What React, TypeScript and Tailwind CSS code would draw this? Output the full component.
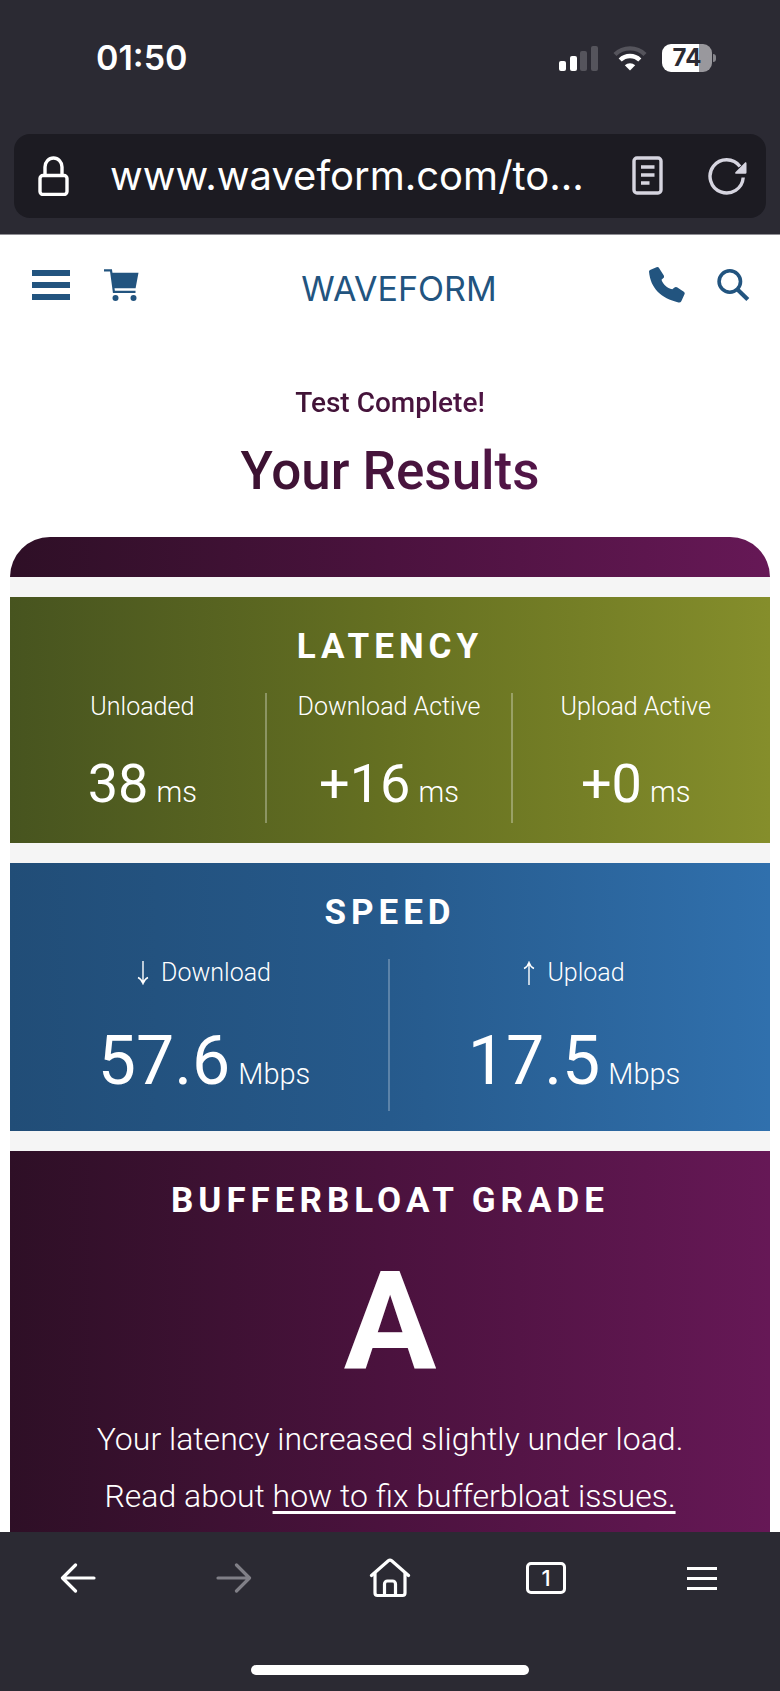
import * as React from "react";

const latency = [
  { label: "Unloaded", value: "38" },
  { label: "Download Active", value: "+16" },
  { label: "Upload Active", value: "+0" },
];

const speed = [
  { label: "Download", value: "57.6", down: true },
  { label: "Upload", value: "17.5", down: false },
];

const SignalIcon = () => (
  <svg width="39" height="25" viewBox="0 0 39 25" aria-hidden="true">
    <rect x="0" y="15" width="7" height="10" rx="2" fill="#fff" />
    <rect x="11" y="10" width="7" height="15" rx="2" fill="#fff" />
    <rect x="21" y="5" width="7" height="20" rx="2" fill="#55545c" />
    <rect x="32" y="0" width="7" height="25" rx="2" fill="#55545c" />
  </svg>
);

const WifiIcon = () => (
  <svg width="34" height="25" viewBox="0 0 34 25" fill="none" aria-hidden="true">
    <path d="M2 8.5a21.5 21.5 0 0 1 30 0" stroke="#55545c" strokeWidth="4.4" />
    <path d="M7.2 14a14 14 0 0 1 19.6 0" stroke="#fff" strokeWidth="4.4" />
    <path d="M17 24.6l5.2-5.4a7.6 7.6 0 0 0-10.4 0z" fill="#fff" />
  </svg>
);

const Battery = () => (
  <div className="flex items-center gap-px">
    <div className="flex h-7 w-[50px] items-center justify-center rounded-[9px] bg-linear-to-r from-white from-75% to-[#99989d] to-75% text-[24px] leading-7 font-bold text-[#2b2a33]">
      74
    </div>
    <div className="h-2 w-[3px] rounded-r-full bg-[#86858b]" />
  </div>
);

const LockIcon = () => (
  <svg width="32" height="40" viewBox="0 0 32 40" fill="none" stroke="#fff" strokeWidth="3.4" aria-hidden="true">
    <rect x="2" y="19.5" width="27" height="19" rx="3" />
    <path d="M7 19.5V11a8.5 9 0 0 1 17 0v8.5" />
  </svg>
);

const ReaderIcon = () => (
  <svg width="32" height="40" viewBox="0 0 32 40" fill="none" stroke="#d6d5e0" strokeWidth="3.4" aria-hidden="true">
    <rect x="2" y="2" width="27" height="35" rx="3" />
    <path d="M9 11h13.5M9 19h13.5M9 27h8.5" />
  </svg>
);

const ReloadIcon = () => (
  <svg width="40" height="38" viewBox="0 0 40 38" fill="none" aria-hidden="true">
    <path d="M35.2 20.5A16.6 16.6 0 1 1 32 9.5" stroke="#d6d5e0" strokeWidth="3.4" />
    <path d="M38.5 6.5v9a1.2 1.2 0 0 1-1.2 1.2h-9c-1.2 0-1.500-1-.7-1.800l9.200-9.200c.8-.8 1.700-.4 1.700.8z" fill="#d6d5e0" />
  </svg>
);

const CartIcon = () => (
  <svg width="35" height="32" viewBox="0 0 35 32" aria-hidden="true">
    <path d="M0 1.3h7l2.900 21.500h21.600" fill="none" stroke="#22547f" strokeWidth="2.2" />
    <path d="M7.500 3.800h27l-2.900 15.500H9.800z" fill="#22547f" />
    <circle cx="11.5" cy="29" r="3" fill="#22547f" />
    <circle cx="29.5" cy="29" r="3" fill="#22547f" />
  </svg>
);

const PhoneIcon = () => (
  <svg width="36" height="36" viewBox="0 0 36 36" fill="#22547f" aria-hidden="true">
    <path d="M0 4.500Q0 3.500 1 3L7.500.3Q9.200-.4 10.200 1.200L14.800 8.600Q15.500 10 14.400 11L12.500 12.800C14 17.500 18 21 23.300 22.300L25.500 20.400Q26.600 19.500 28 20.300L34.800 24.800Q36.200 25.800 35.500 27.300L32.300 34.200Q31.400 35.900 29.500 35.500C12 31 1.500 21.500 0 4.500Z" />
  </svg>
);

const SearchIcon = () => (
  <svg width="33" height="33" viewBox="0 0 33 33" fill="none" stroke="#22547f" aria-hidden="true">
    <circle cx="12.8" cy="12.5" r="10.7" strokeWidth="3.6" />
    <path d="M20.5 20.5l10.300 10" strokeWidth="4.2" />
  </svg>
);

const SpeedArrow = ({ down }: { down: boolean }) => (
  <svg width="12" height="24" viewBox="0 0 12 24" fill="none" stroke="#fff" strokeWidth="1.4" aria-hidden="true">
    {down ? <path d="M6 0v22M1 16.5q3.500 1.500 5 6 1.500-4.500 5-6" /> : <path d="M6 24V2M1 7.5Q4.500 6 6 1.500 7.500 6 11 7.500" />}
  </svg>
);

const ArrowIcon = ({ flip }: { flip?: boolean }) => (
  <svg
    width="36"
    height="30"
    viewBox="0 0 36 30"
    fill="none"
    stroke={flip ? "#807f87" : "#fff"}
    strokeWidth="3.2"
    strokeLinecap="round"
    strokeLinejoin="round"
    aria-hidden="true"
  >
    {flip ? <path d="M2 15h31M20.500 2L33.500 15l-13 13" /> : <path d="M34 15H3M15.500 2L2.500 15l13 13" />}
  </svg>
);

const HomeIcon = () => (
  <svg
    width="42"
    height="40"
    viewBox="0 0 42 40"
    fill="none"
    stroke="#fff"
    strokeWidth="3.2"
    strokeLinecap="round"
    strokeLinejoin="round"
    aria-hidden="true"
  >
    <path d="M2.500 17.500L19.300 2.800a2.600 2.600 0 0 1 3.400 0L39.500 17.500" />
    <path d="M6 15.500V35a2.500 2.500 0 0 0 2.500 2.500h25A2.500 2.500 0 0 0 36 35V15.500" />
    <path d="M15.500 37V26a3 3 0 0 1 3-3h5a3 3 0 0 1 3 3v11" />
  </svg>
);

const StatTitle = ({ children }: { children: React.ReactNode }) => (
  <h2 className="text-center text-[35px] leading-10 font-bold tracking-[5px] uppercase">{children}</h2>
);

export default function App() {
  return (
    <div className="flex min-h-screen flex-col bg-white font-['Roboto',sans-serif]">
      <header className="border-b border-[#8f8e94] bg-[#2b2a33] pb-4 font-['Inter',sans-serif]">
        <div className="flex items-center justify-between pt-10 pr-16 pb-[58px] pl-24 text-white">
          <span className="text-[34px] leading-9 font-semibold">01:50</span>
          <div className="flex items-center gap-[15px]">
            <SignalIcon />
            <WifiIcon />
            <Battery />
          </div>
        </div>
        <div className="mx-3.5 flex items-center rounded-2xl bg-[#1c1b22] py-3 pr-[18px] pl-6">
          <LockIcon />
          <input
            aria-label="Address"
            readOnly
            value="www.waveform.com/to..."
            className="ml-10 h-[60px] min-w-0 flex-1 bg-transparent text-[40px] text-white outline-none"
          />
          <div className="flex items-center gap-11">
            <button aria-label="Reader view">
              <ReaderIcon />
            </button>
            <button aria-label="Reload">
              <ReloadIcon />
            </button>
          </div>
        </div>
      </header>

      <nav className="grid grid-cols-[1fr_auto_1fr] items-center pt-7 pr-[30px] pl-8">
        <div className="flex items-center gap-[34px]">
          <button aria-label="Menu" className="flex w-[38px] flex-col gap-1.5">
            <span className="h-1.5 w-full bg-[#22547f]" />
            <span className="h-1.5 w-full bg-[#22547f]" />
            <span className="h-1.5 w-full bg-[#22547f]" />
          </button>
          <a href="#cart" aria-label="Cart">
            <CartIcon />
          </a>
        </div>
        <a href="#home" className="pt-2 pl-4 font-['Inter',sans-serif] text-[34px] leading-9 text-[#22547f]">
          WAVEFORM
        </a>
        <div className="flex items-center justify-end gap-8">
          <a href="#call" aria-label="Call">
            <PhoneIcon />
          </a>
          <button aria-label="Search">
            <SearchIcon />
          </button>
        </div>
      </nav>

      <main className="flex flex-1 flex-col px-2.5 pt-19">
        <div className="mx-auto mb-8.5 bg-linear-to-r from-[#3b1231] to-[#531548] bg-clip-text text-center text-transparent">
          <p className="text-[28px] leading-10 font-medium">Test Complete!</p>
          <h1 className="mt-4 text-[53px] leading-16 font-medium">Your Results</h1>
        </div>

        <div className="flex flex-1 flex-col gap-5 rounded-t-[40px] bg-[#f5f5f5] text-white">
          <div className="h-10 rounded-t-[40px] bg-linear-to-r from-[#2e0f26] via-[#4b123e] to-[#661856]" />

          <section className="bg-linear-to-r from-[#47541f] via-[#657021] to-[#858e2b] px-2.5 pt-[30px] pb-5">
            <StatTitle>Latency</StatTitle>
            <div className="mt-[26px] grid grid-cols-3">
              {latency.map((item) => (
                <div key={item.label} className="border-r-2 border-white/30 pb-1 text-center last:border-transparent">
                  <p className="text-[25px] leading-7 font-light">{item.label}</p>
                  <p className="pt-7 text-[54px] leading-[70px]">
                    {item.value}
                    <span className="ml-2 text-[29px] leading-none font-light">ms</span>
                  </p>
                </div>
              ))}
            </div>
          </section>

          <section className="bg-linear-to-r from-[#214d77] via-[#265a8c] to-[#3070ad] px-2.5 pt-[30px] pb-5">
            <StatTitle>Speed</StatTitle>
            <div className="mt-[26px] grid grid-cols-2">
              {speed.map((item) => (
                <div key={item.label} className="border-r-2 border-white/25 pb-1 text-center last:border-transparent">
                  <p className="flex items-center justify-center gap-3 text-[25px] leading-7 font-light">
                    <SpeedArrow down={item.down} />
                    {item.label}
                  </p>
                  <p className="pt-7 text-[68px] leading-[92px]">
                    {item.value}
                    <span className="ml-2 text-[29px] leading-none font-light">Mbps</span>
                  </p>
                </div>
              ))}
            </div>
          </section>

          <section className="flex-1 bg-linear-to-r from-[#2e0f26] via-[#4b123e] to-[#661856] px-2.5 pt-[30px] text-center">
            <StatTitle>Bufferbloat Grade</StatTitle>
            <p className="pt-[26px] text-[138px] leading-[150px] font-bold">A</p>
            <p className="pt-3.5 text-[32px] leading-[57px] font-light">
              Your latency increased slightly under load.
              <br />
              Read about{" "}
              <a href="#fix" className="underline underline-offset-4">
                how to fix bufferbloat issues.
              </a>
            </p>
          </section>
        </div>
      </main>

      <footer className="bg-[#2b2a33] pt-6 pb-4 font-['Inter',sans-serif] text-white">
        <div className="grid h-11 grid-cols-5 place-items-center">
          <button aria-label="Back">
            <ArrowIcon />
          </button>
          <button aria-label="Forward" disabled>
            <ArrowIcon flip />
          </button>
          <button aria-label="Home">
            <HomeIcon />
          </button>
          <button
            aria-label="Tabs"
            className="flex h-8 w-10 items-center justify-center rounded-[5px] border-3 border-white text-[22px] leading-none font-medium"
          >
            1
          </button>
          <button aria-label="Browser menu" className="flex w-[30px] flex-col gap-[7px]">
            <span className="h-[3px] w-full bg-white" />
            <span className="h-[3px] w-full bg-white" />
            <span className="h-[3px] w-full bg-white" />
          </button>
        </div>
        <div className="mx-auto mt-[65px] h-2.5 w-[278px] rounded-full bg-white" />
      </footer>
    </div>
  );
}
